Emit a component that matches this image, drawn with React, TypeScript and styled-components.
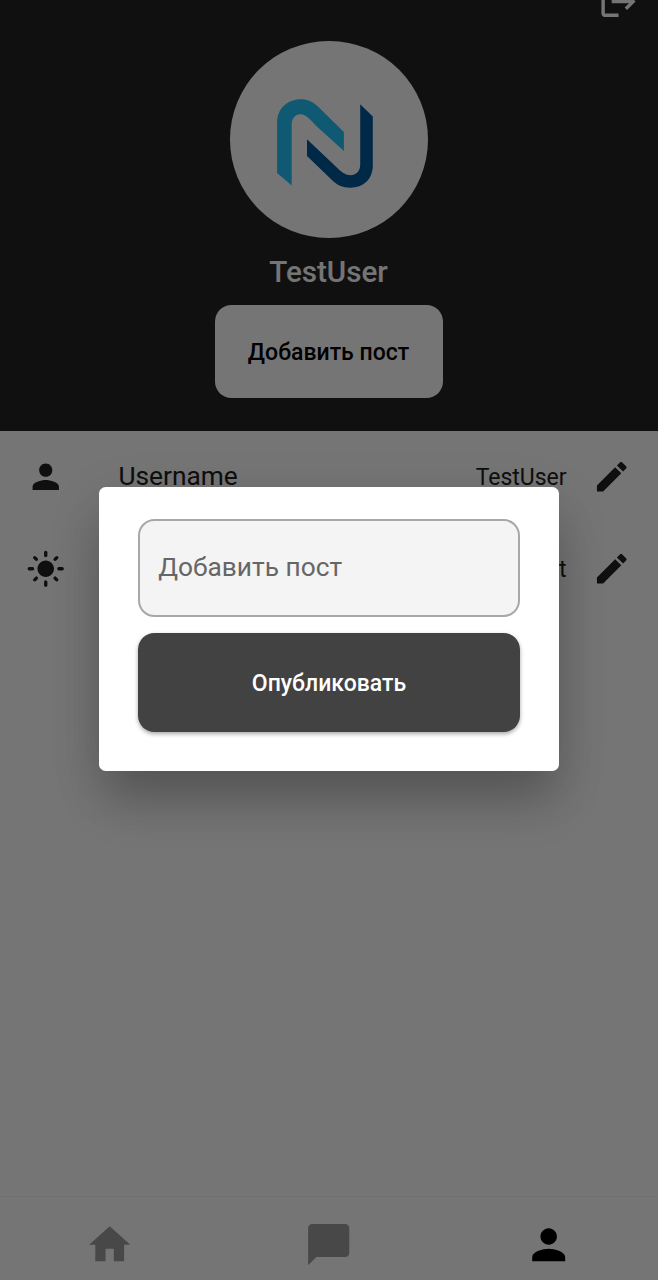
import React from 'react';
import styled, { createGlobalStyle } from 'styled-components';

const GlobalStyle = createGlobalStyle`
  *, *::before, *::after { box-sizing: border-box; }
  body { margin: 0; font-family: Roboto, "Noto Sans", sans-serif; overflow: hidden; }
`;

const Screen = styled.div`
  position: relative;
  display: flex;
  flex-direction: column;
  height: 1280px;
  overflow: hidden;
  background: #fefefe;
`;

const Header = styled.header`
  position: relative;
  display: flex;
  flex-direction: column;
  align-items: center;
  flex: none;
  height: 431px;
  padding-top: 40.5px;
  background: #242424;
`;

const LogoutButton = styled.button`
  position: absolute;
  top: -19px;
  right: 19px;
  padding: 0;
  border: 0;
  background: none;
  color: #fff;
  display: flex;
`;

const Avatar = styled.div`
  width: 197.4px;
  height: 197.4px;
  border-radius: 50%;
  overflow: hidden;
  background: #fff;
`;

const UserTitle = styled.h1`
  margin: 16px 1px 15.4px 0;
  font-size: 29.6px;
  line-height: 36px;
  font-weight: 500;
  color: #fff;
`;

const AddButton = styled.button`
  width: 228.6px;
  height: 92.5px;
  padding: 2.4px 1px 0 0;
  border: 0;
  border-radius: 16.5px;
  background: #fff;
  color: #000;
  font: 500 23px/30px Roboto, sans-serif;
`;

const Settings = styled.main`
  flex: 1;
`;

const SettingRow = styled.div`
  display: flex;
  align-items: center;
  height: 92px;
  padding: 0 26.5px 0 26.4px;
  color: #212121;
`;

const RowLabel = styled.span`
  flex: 1;
  margin: 0 0 2px 52.6px;
  font-size: 26.3px;
`;

const RowValue = styled.span`
  margin: 0 25.4px 0 0;
  font-size: 23px;
`;

const NavBar = styled.nav`
  display: flex;
  flex: none;
  height: 84px;
  border-top: 1px solid #f5f5f5;
`;

const NavItem = styled.a<{ $active?: boolean }>`
  flex: 1;
  display: flex;
  justify-content: center;
  padding-top: 23.4px;
  color: ${(p) => (p.$active ? '#000' : '#9e9e9e')};
`;

const Scrim = styled.div`
  position: absolute;
  inset: 0;
  display: flex;
  justify-content: center;
  align-items: flex-start;
  padding-top: 486.6px;
  background: rgba(0, 0, 0, 0.54);
`;

const Dialog = styled.section`
  display: flex;
  flex-direction: column;
  gap: 16.4px;
  width: 460.6px;
  height: 284.6px;
  padding: 32.9px 39.5px 0;
  border-radius: 6.6px;
  background: #fff;
  box-shadow: 0 36px 50px -6px rgba(0, 0, 0, 0.2), 0 14px 52px 0 rgba(0, 0, 0, 0.13);
`;

const PostInput = styled.input`
  width: 100%;
  height: 97.2px;
  padding: 0 18px 3px;
  border: 2px solid #a8a8a8;
  border-radius: 16.5px;
  outline: 0;
  background: #f4f4f4;
  font: 400 26.3px Roboto, sans-serif;
  &::placeholder { color: #666; opacity: 1; }
`;

const PublishButton = styled.button`
  width: 100%;
  height: 98.7px;
  padding: 2.6px 0 0;
  border: 0;
  border-radius: 16.5px;
  background: #424242;
  color: #fff;
  font: 500 23px/30px Roboto, sans-serif;
  box-shadow: 0 2px 4px rgba(0, 0, 0, 0.35);
`;

const Svg = styled.svg`
  display: block;
  flex: none;
`;

const paths = {
  person:
    'M12 12c2.21 0 4-1.79 4-4s-1.79-4-4-4-4 1.79-4 4 1.79 4 4 4zm0 2c-2.67 0-8 1.34-8 4v2h16v-2c0-2.66-5.33-4-8-4z',
  edit:
    'M3 17.25V21h3.75L17.81 9.94l-3.75-3.75L3 17.25zM20.71 7.04c.39-.39.39-1.02 0-1.41l-2.34-2.34c-.39-.39-1.02-.39-1.41 0l-1.83 1.83 3.75 3.75 1.83-1.83z',
  sun:
    'M12 7c-2.76 0-5 2.24-5 5s2.24 5 5 5 5-2.24 5-5-2.24-5-5-5zM2 13h2c.55 0 1-.45 1-1s-.45-1-1-1H2c-.55 0-1 .45-1 1s.45 1 1 1zm18 0h2c.55 0 1-.45 1-1s-.45-1-1-1h-2c-.55 0-1 .45-1 1s.45 1 1 1zM11 2v2c0 .55.45 1 1 1s1-.45 1-1V2c0-.55-.45-1-1-1s-1 .45-1 1zm0 18v2c0 .55.45 1 1 1s1-.45 1-1v-2c0-.55-.45-1-1-1s-1 .45-1 1zM5.99 4.58a.996.996 0 0 0-1.41 0 .996.996 0 0 0 0 1.41l1.06 1.06c.39.39 1.03.39 1.41 0s.39-1.03 0-1.41L5.99 4.58zm12.37 12.37a.996.996 0 0 0-1.41 0 .996.996 0 0 0 0 1.41l1.06 1.06c.39.39 1.03.39 1.41 0a.996.996 0 0 0 0-1.41l-1.06-1.06zm1.06-10.96a.996.996 0 0 0 0-1.41.996.996 0 0 0-1.41 0l-1.06 1.06c-.39.39-.39 1.03 0 1.41s1.03.39 1.41 0l1.06-1.06zM7.05 18.36a.996.996 0 0 0 0-1.41.996.996 0 0 0-1.41 0l-1.06 1.06c-.39.39-.39 1.03 0 1.41s1.03.39 1.41 0l1.06-1.06z',
  home: 'M10 20v-6h4v6h5v-8h3L12 3 2 12h3v8z',
  chat: 'M20 2H4c-1.1 0-2 .9-2 2v18l4-4h14c1.1 0 2-.9 2-2V4c0-1.1-.9-2-2-2z',
  logout:
    'M17 7l-1.41 1.41L18.17 11H8v2h10.17l-2.58 2.58L17 17l5-5zM4 5h8V3H4c-1.1 0-2 .9-2 2v14c0 1.1.9 2 2 2h8v-2H4V5z',
};

const Icon = ({ name, size = 39.5 }: { name: keyof typeof paths; size?: number }) => (
  <Svg width={size} height={size} viewBox="0 0 24 24" fill="currentColor">
    <path d={paths[name]} />
  </Svg>
);

const Logo = () => (
  <Svg width="198" height="198" viewBox="-0.4 0.4 198 198">
    <path
      fill="#24c2f8"
      d="M46.7 132.5V82C46.7 68 57 58.7 70.5 58.7C77 58.7 82 61 87 65.5L113.5 91.5V110.5L87 86.5C80 79.5 76 73.7 70 73.7C64.5 73.7 61.3 78 61.3 84V145Z"
    />
    <path
      fill="#005a9e"
      d="M129.8 63.7L142.4 76V125C142.4 138.5 133 147.2 120 147.2C112 147.2 106.5 144.5 101.5 139.5L76.6 115.5V98.7L107.5 128C112.5 132.7 115.5 134.6 120 134.6C126.5 134.6 129.8 130 129.8 124Z"
    />
  </Svg>
);

export default function App() {
  return (
    <>
      <GlobalStyle />
      <Screen>
        <Header>
          <LogoutButton aria-label="logout"><Icon name="logout" size={41} /></LogoutButton>
          <Avatar><Logo /></Avatar>
          <UserTitle>TestUser</UserTitle>
          <AddButton>Добавить пост</AddButton>
        </Header>
        <Settings>
          <SettingRow>
            <Icon name="person" />
            <RowLabel>Username</RowLabel>
            <RowValue>TestUser</RowValue>
            <Icon name="edit" />
          </SettingRow>
          <SettingRow>
            <Icon name="sun" />
            <RowLabel />
            <RowValue>Light</RowValue>
            <Icon name="edit" />
          </SettingRow>
        </Settings>
        <NavBar>
          <NavItem><Icon name="home" size={49.4} /></NavItem>
          <NavItem><Icon name="chat" size={49.4} /></NavItem>
          <NavItem $active><Icon name="person" size={49.4} /></NavItem>
        </NavBar>
        <Scrim>
          <Dialog>
            <PostInput placeholder="Добавить пост" />
            <PublishButton>Опубликовать</PublishButton>
          </Dialog>
        </Scrim>
      </Screen>
    </>
  );
}
